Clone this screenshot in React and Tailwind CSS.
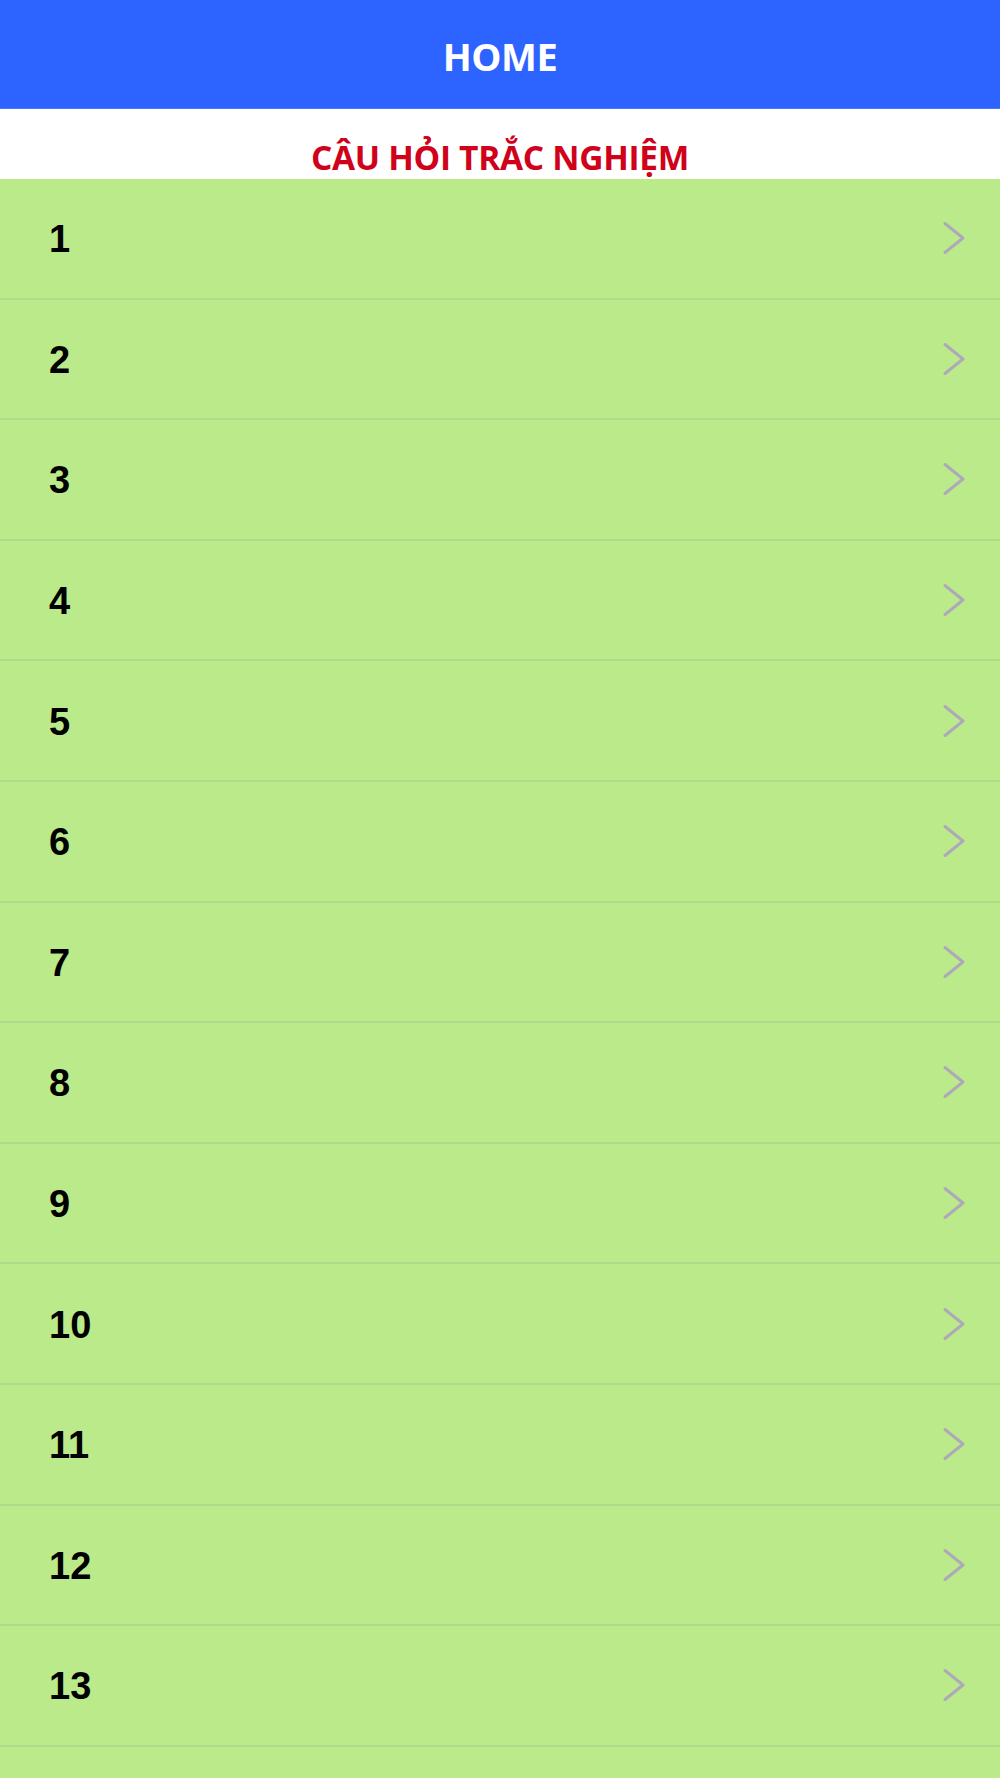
import React from "react";

const questions = Array.from({ length: 14 }, (_, i) => i + 1);

const Chevron = () => (
  <svg width="24" height="34" viewBox="0 0 24 34" fill="none" className="shrink-0">
    <polyline
      points="3,2.5 21,17 3,31.5"
      stroke="#aea9b8"
      strokeWidth="3"
      strokeLinecap="round"
      strokeLinejoin="round"
    />
  </svg>
);

const App = () => {
  return (
    <div className="min-h-screen bg-[#bbea8a]">
      {/* Header */}
      <div className="h-[109px] bg-[#2d63ff] flex items-center justify-center border-b border-[#4a7bff]">
        <h1 className="text-white text-[38px] font-bold leading-none tracking-[-0.5px] font-['Open_Sans',sans-serif] pt-[3px]">
          HOME
        </h1>
      </div>

      {/* Section title */}
      <div className="h-[70px] bg-white flex items-end justify-center pb-[5px]">
        <h2 className="text-[#d0021b] text-[33.5px] font-bold leading-none tracking-[-0.3px] font-['Open_Sans',sans-serif]">
          CÂU HỎI TRẮC NGHIỆM
        </h2>
      </div>

      {/* Question list */}
      <ul>
        {questions.map((n) => (
          <li
            key={n}
            className="h-[120.6px] border-b-2 border-[#b2d98b] flex items-center justify-between pl-[49px] pr-[34px]"
          >
            <span className="text-black text-[38px] leading-none font-bold pt-[2px] font-['Liberation_Sans',Arial,sans-serif]">
              {n}
            </span>
            <Chevron />
          </li>
        ))}
      </ul>
    </div>
  );
};

export default App;
